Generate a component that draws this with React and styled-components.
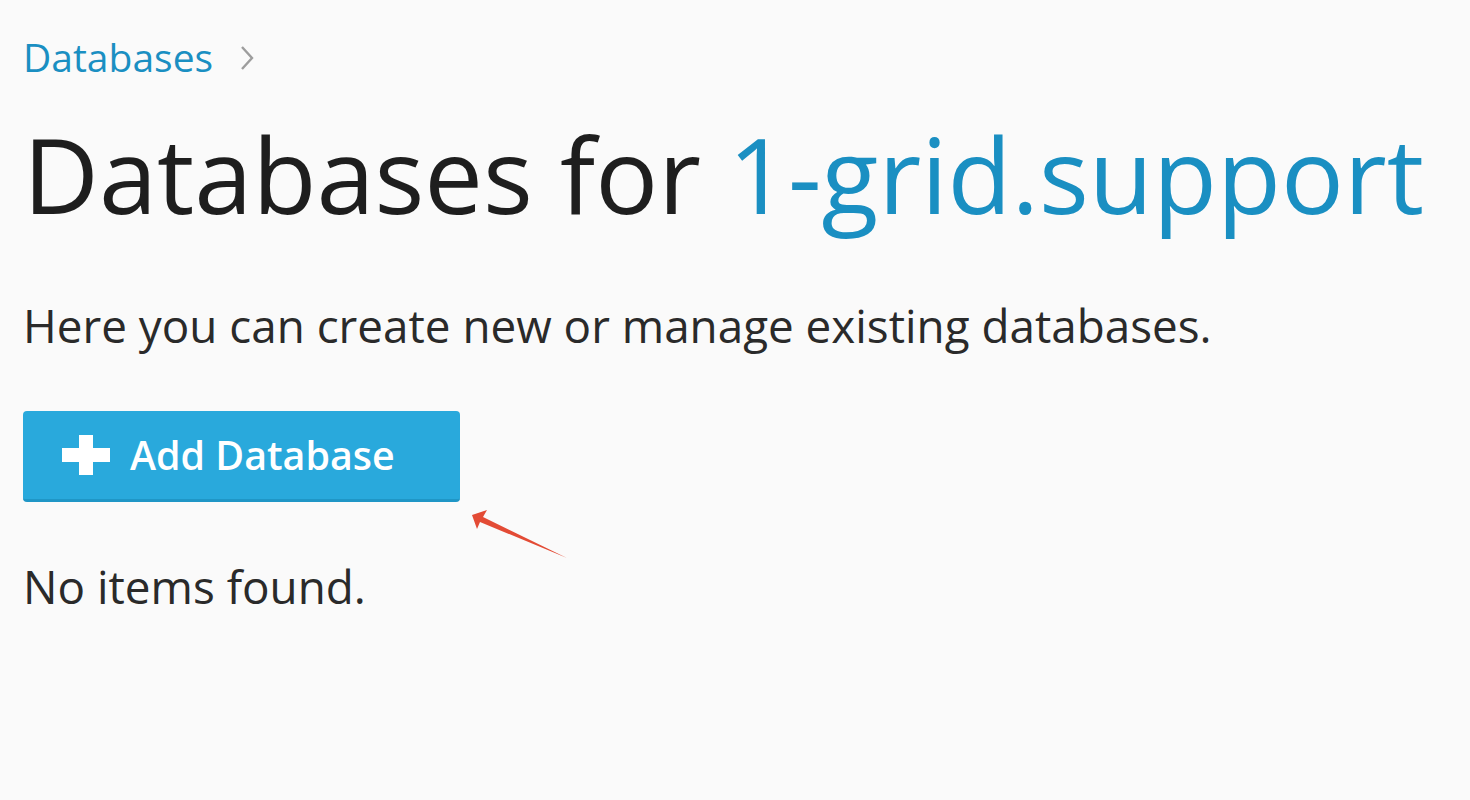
import React from 'react';
import styled, { createGlobalStyle } from 'styled-components';

const GlobalStyle = createGlobalStyle`
  html, body {
    margin: 0;
    padding: 0;
    background: #fafafa;
  }
  body {
    font-family: 'Open Sans', 'Noto Sans', sans-serif;
    color: #222;
  }
`;

const Page = styled.div`
  position: relative;
  width: 1470px;
  height: 800px;
  padding: 34px 0 0 23px;
  box-sizing: border-box;
`;

const Breadcrumbs = styled.nav`
  display: flex;
  align-items: center;
  gap: 26px;
  font-size: 39px;
  line-height: 46px;
`;

const Crumb = styled.a`
  color: #1a8fc2;
  text-decoration: none;
`;

const Chevron = styled.span`
  display: inline-flex;
  margin-top: 2px;
`;

const Title = styled.h1`
  margin: 31px 0 0;
  font-size: 104.6px;
  font-weight: 400;
  line-height: 126px;
  color: #1e1e1e;
`;

const Subject = styled.span`
  color: #1a8fc2;
`;

const Text = styled.p`
  margin: ${(p) => p.$gap}px 0 0;
  font-size: 45.8px;
  line-height: 60px;
  color: #2a2a2a;
`;

const Toolbar = styled.div`
  margin-top: 56px;
  display: flex;
`;

const AddButton = styled.button`
  display: flex;
  align-items: center;
  gap: 20px;
  width: 437px;
  height: 91px;
  padding: 0 0 0 39px;
  box-sizing: border-box;
  border: none;
  border-bottom: 3px solid #1f96c6;
  border-radius: 4px;
  background: #29a9dc;
  color: #fff;
  font-family: 'Open Sans', 'Noto Sans', sans-serif;
  font-size: 39.4px;
  font-weight: 600;
  cursor: pointer;
`;

const Pointer = styled.svg`
  position: absolute;
  left: 460px;
  top: 500px;
`;

const PlusIcon = () => (
  <svg width="48" height="40" viewBox="0 0 48 40">
    <path d="M17 0h14v13h17v14H31v13H17V27H0V13h17z" fill="#fff" />
  </svg>
);

const ChevronIcon = () => (
  <svg width="16" height="26" viewBox="0 0 16 26">
    <path d="M3 2l10 11-10 11" fill="none" stroke="#9d9d9d" strokeWidth="2.4" />
  </svg>
);

export default function App() {
  return (
    <>
      <GlobalStyle />
      <Page>
        <Breadcrumbs>
          <Crumb href="#">Databases</Crumb>
          <Chevron>
            <ChevronIcon />
          </Chevron>
        </Breadcrumbs>
        <Title>
          Databases for <Subject>1-grid.support</Subject>
        </Title>
        <Text $gap={58}>Here you can create new or manage existing databases.</Text>
        <Toolbar>
          <AddButton>
            <PlusIcon />
            Add Database
          </AddButton>
        </Toolbar>
        <Text $gap={54}>No items found.</Text>
        <Pointer width="120" height="70" viewBox="0 0 120 70">
          <path
            d="M12 15L27 10L23 17L107 58L20 22L17 29Z"
            fill="#e34b35"
          />
        </Pointer>
      </Page>
    </>
  );
}
